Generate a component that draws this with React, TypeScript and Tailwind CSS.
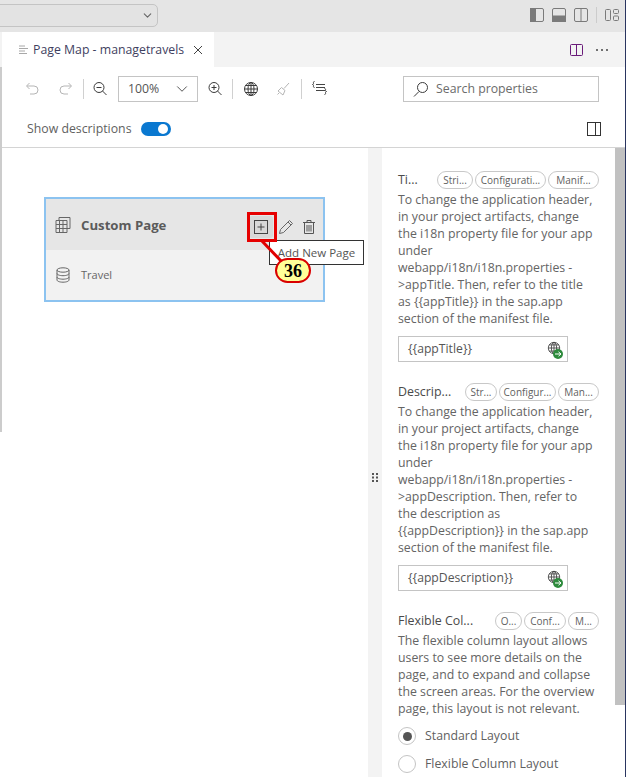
import { ChevronDown } from "lucide-react"
import type { ReactNode } from "react"

const font = { fontFamily: '"Open Sans", "Liberation Sans", sans-serif' }

function Glyph({ size = 16, stroke = "#616161", children }: { size?: number; stroke?: string; children: ReactNode }) {
  return (
    <svg width={size} height={size} viewBox="0 0 16 16" fill="none" stroke={stroke} strokeWidth="1" className="shrink-0">
      {children}
    </svg>
  )
}

function Globe({ size = 16, stroke = "#3b3b3b" }: { size?: number; stroke?: string }) {
  return (
    <Glyph size={size} stroke={stroke}>
      <circle cx="8" cy="8" r="6.5" />
      <ellipse cx="8" cy="8" rx="3" ry="6.5" />
      <path d="M1.5 8h13M2.5 4.5h11M2.5 11.5h11M8 1.5v13" />
    </Glyph>
  )
}

function Pill({ w, children }: { w: number; children: ReactNode }) {
  return (
    <span
      className="flex h-[18px] shrink-0 items-center justify-center rounded-full border border-[#c8c8c8] bg-white text-[10px] text-[#5f5f5f]"
      style={{ width: w }}
    >
      {children}
    </span>
  )
}

function TextField({ value }: { value: string }) {
  return (
    <div className="flex h-[26px] w-[170px] items-center justify-between border border-[#c4c4c4] pl-[9px] pr-[5px] text-[12.2px] text-[#555555]">
      <span className="pt-[1px]">{value}</span>
      <span className="relative block h-[16px] w-[15px]">
        <Globe size={14} stroke="#444444" />
        <svg width="10" height="10" viewBox="0 0 10 10" className="absolute bottom-[-2px] right-[-1px]">
          <circle cx="5" cy="5" r="5" fill="#2e8b3d" />
          <path d="M2 5h6M5.500 2.800L8 5 5.500 7.200" fill="none" stroke="#ffffff" strokeWidth="1" />
        </svg>
      </span>
    </div>
  )
}

function Radio({ checked, label }: { checked?: boolean; label: string }) {
  return (
    <div className="flex h-[28px] items-center gap-[9px] text-[12.3px] text-[#5f5f5f]">
      <span className="flex h-[18px] w-[18px] items-center justify-center rounded-full border border-[#c4c4c4]">
        {checked && <span className="h-[9px] w-[9px] rounded-full bg-[#555555]" />}
      </span>
      {label}
    </div>
  )
}

function Property({
  title,
  titleW,
  pills,
  field,
  children,
}: {
  title: string
  titleW: number
  pills: [number, string][]
  field?: string
  children: ReactNode
}) {
  return (
    <div>
      <div className="flex h-[18px] items-center">
        <span className="shrink-0 whitespace-nowrap pt-[1px] text-[12.4px] font-medium text-[#4a4a4a]" style={{ width: titleW }}>
          {title}
        </span>
        <div className="flex gap-[2px]">
          {pills.map(([w, t]) => (
            <Pill key={t} w={w}>
              {t}
            </Pill>
          ))}
        </div>
      </div>
      <p className="mt-[2px] whitespace-nowrap text-[12.3px] leading-[17px] text-[#646464]">{children}</p>
      {field && (
        <div className="mt-[9px]">
          <TextField value={field} />
        </div>
      )}
    </div>
  )
}

export default function App() {
  return (
    <div className="relative flex h-[777px] w-[626px] flex-col overflow-hidden border-r border-[#2a3560] bg-white" style={font}>
      {/* window title bar */}
      <div className="flex h-[32px] shrink-0 items-center justify-between bg-[#e5e5e5] pb-[2px] pr-[6px]">
        <div className="ml-[-10px] flex h-[23px] w-[168px] items-center justify-end rounded-[5px] border border-[#c4c4c4] bg-[#e3e3e3] pr-[3px]">
          <ChevronDown size={13} color="#666666" />
        </div>
        <div className="flex items-center gap-[8px]">
          <svg width="14" height="14" viewBox="0 0 14 14" fill="none" stroke="#7a7a7a">
            <rect x="0.5" y="0.5" width="13" height="13" rx="1.5" />
            <rect x="0.5" y="0.5" width="5" height="13" fill="#7a7a7a" />
          </svg>
          <svg width="14" height="14" viewBox="0 0 14 14" fill="none" stroke="#7a7a7a">
            <rect x="0.5" y="0.5" width="13" height="13" rx="1.5" />
            <rect x="0.5" y="8" width="13" height="5.5" fill="#7a7a7a" />
          </svg>
          <svg width="14" height="14" viewBox="0 0 14 14" fill="none" stroke="#7a7a7a">
            <rect x="0.5" y="0.5" width="13" height="13" rx="1.5" />
            <path d="M7 .5v13" />
          </svg>
          <span className="h-[16px] w-px bg-[#cccccc]" />
          <svg width="14" height="14" viewBox="0 0 14 14" fill="none" stroke="#7a7a7a">
            <rect x="0.5" y="1.5" width="5" height="11" rx="1" />
            <rect x="8.5" y="1.5" width="5" height="4" rx="1" />
            <rect x="8.5" y="8" width="5" height="4.5" rx="1" />
          </svg>
        </div>
      </div>

      {/* tab strip */}
      <div className="flex h-[35px] shrink-0 items-center justify-between bg-[#f3f3f3] pl-[2px] pr-[17px]">
        <div className="flex h-full w-[212px] items-center bg-white pl-[16px]">
          <svg width="12" height="12" viewBox="0 0 12 12" stroke="#a8a8a8" className="mr-[3px]">
            <path d="M1 2h6M1 4.500h9M1 7h6M1 9.500h8" />
          </svg>
          <span className="whitespace-nowrap pt-[1px] text-[12.3px] text-[#3f3f5f]">Page Map - managetravels</span>
          <svg width="12" height="12" viewBox="0 0 12 12" stroke="#444444" className="ml-[8px]">
            <path d="M2 2l8 8M10 2l-8 8" />
          </svg>
        </div>
        <div className="flex items-center gap-[12px]">
          <svg width="14" height="14" viewBox="0 0 14 14" fill="none" stroke="#6a1b7a">
            <rect x="0.5" y="1.5" width="12" height="11" rx="1" />
            <path d="M6.500 1.500v11" />
          </svg>
          <span className="flex gap-[3px]">
            <span className="h-[2px] w-[2px] rounded-full bg-[#444444]" />
            <span className="h-[2px] w-[2px] rounded-full bg-[#444444]" />
            <span className="h-[2px] w-[2px] rounded-full bg-[#444444]" />
          </span>
        </div>
      </div>

      <div className="flex min-h-0 flex-1">
        <div className="mb-[345px] w-[2px] shrink-0 bg-[#cccccc]" />
        <div className="flex min-w-0 flex-1 flex-col">
          {/* toolbar */}
          <div className="flex h-[43px] shrink-0 items-center pl-[22px] pr-[26px]">
            <Glyph stroke="#b5b5b5">
              <path d="M5.500 2L2.500 5l3 3M3 5h7a3.500 3.500 0 0 1 0 8H6" />
            </Glyph>
            <span className="ml-[18px]">
              <Glyph stroke="#b5b5b5">
                <path d="M10.500 2l3 3-3 3M13 5H6a3.500 3.500 0 0 0 0 8h4" />
              </Glyph>
            </span>
            <span className="ml-[9px] mr-[8px] h-[20px] w-px bg-[#d0d0d0]" />
            <Glyph stroke="#3b3b3b">
              <circle cx="7" cy="6.500" r="5" />
              <path d="M4.500 6.500h5M10.500 10l4 4" />
            </Glyph>
            <div className="ml-[10px] flex h-[26px] w-[80px] items-center justify-between border border-[#c4c4c4] pl-[9px] pr-[6px] text-[12.3px] text-[#555555]">
              <span className="pt-[1px]">100%</span>
              <ChevronDown size={18} color="#444444" strokeWidth={1.2} />
            </div>
            <span className="ml-[9px]">
              <Glyph stroke="#3b3b3b">
                <circle cx="7" cy="6.500" r="5" />
                <path d="M4.500 6.500h5M7 4v5M10.500 10l4 4" />
              </Glyph>
            </span>
            <span className="ml-[9px] mr-[10px] h-[20px] w-px bg-[#d0d0d0]" />
            <Globe />
            <span className="ml-[16px]">
              <Glyph stroke="#b5b5b5">
                <path d="M14 2L9 7.500M6.500 6.500l3.500 3-2 4.500-5-4zM4 12l-1.500 1.500" />
              </Glyph>
            </span>
            <span className="ml-[10px] mr-[8px] h-[20px] w-px bg-[#d0d0d0]" />
            <svg width="18" height="14" viewBox="0 0 18 14" fill="none" stroke="#444444" className="mb-[2px] shrink-0">
              <path d="M4.500 0.500C3 0.500 3.500 2 3.500 2.500S3 3.500 2.500 3.500c.5 0 1 .5 1 1S3 6.500 4.500 6.500M6 3.500h9M6 6.500h9M6 9.500h9M14.500 7.500c1.500 0 1 1.500 1 2s.5 1 1 1c-.5 0-1 .5-1 1s.5 2-1 2" />
            </svg>
            <div className="ml-auto flex h-[26px] w-[196px] items-center border border-[#c4c4c4] pl-[9px] text-[12.3px] text-[#6b6b6b]">
              <svg width="16" height="16" viewBox="0 0 16 16" fill="none" stroke="#3b3b3b" className="mr-[7px] shrink-0">
                <circle cx="9.500" cy="6.500" r="5" />
                <path d="M6 10.500L1 15.500" />
              </svg>
              <span className="pt-[1px]">Search properties</span>
            </div>
          </div>

          {/* show descriptions row */}
          <div className="flex h-[38px] shrink-0 items-center border-b border-[#d4d4d4] pl-[25px] pr-[24px]">
            <span className="pt-[1px] text-[12.3px] text-[#616161]">Show descriptions</span>
            <span className="ml-[9px] flex h-[14px] w-[30px] items-center justify-end rounded-full bg-[#0a78d0] pr-[3px]">
              <span className="h-[10px] w-[10px] rounded-full bg-white" />
            </span>
            <svg width="14" height="14" viewBox="0 0 14 14" fill="none" stroke="#333333" className="ml-auto">
              <rect x="0.5" y="0.5" width="13" height="13" />
              <path d="M8.500 .5v13" />
            </svg>
          </div>

          <div className="flex min-h-0 flex-1">
            {/* canvas */}
            <div className="w-[366px] shrink-0 pl-[42px] pt-[49px]">
              <div className="h-[105px] w-[281px] border-2 border-[#8cc3f0] bg-[#f2f2f2]">
                <div className="flex h-[51px] items-center bg-[#e6e6e6] pl-[9px] pr-[6px]">
                  <svg width="16" height="18" viewBox="0 0 16 18" fill="none" stroke="#666666" className="shrink-0">
                    <path d="M1 4.500h11v12H1zM1 8.500h11M1 12.500h11M4.500 4.500v12M8 4.500v12M4 4.500V1.500h11v11h-3" />
                  </svg>
                  <span className="ml-[10px] pt-[2px] text-[13.2px] font-bold text-[#5b5b5b]">Custom Page</span>
                  <div className="ml-auto flex items-center pt-[4px]">
                    <span className="flex h-[22px] w-[24px] items-center justify-center rounded-[3px] bg-[#d8d8d8]">
                      <svg width="14" height="14" viewBox="0 0 14 14" fill="none" stroke="#444444">
                        <rect x="0.5" y="0.5" width="13" height="13" />
                        <path d="M3.500 7h7M7 3.500v7" />
                      </svg>
                    </span>
                    <span className="ml-[5px]">
                      <Glyph stroke="#666666">
                        <path d="M1.500 14.500l1-4L11.500 1.500l3 3-9 9zM10 3l3 3" />
                      </Glyph>
                    </span>
                    <span className="ml-[7px]">
                      <Glyph stroke="#555555">
                        <path d="M2 3.500h12M6 3.500V1.500h4v2M3.500 3.500v11h9v-11M6 6v6.500M8 6v6.500M10 6v6.500" />
                      </Glyph>
                    </span>
                  </div>
                </div>
                <div className="flex h-[50px] items-center pl-[9px]">
                  <svg width="16" height="16" viewBox="0 0 16 16" fill="none" stroke="#666666" className="shrink-0">
                    <ellipse cx="8" cy="3" rx="6" ry="2.2" />
                    <path d="M2 3v10c0 1.200 2.700 2.200 6 2.200s6-1 6-2.200V3M2 6.500c0 1.200 2.700 2.200 6 2.200s6-1 6-2.200M2 10c0 1.200 2.700 2.200 6 2.200s6-1 6-2.200" />
                  </svg>
                  <span className="ml-[10px] pt-[1px] text-[11px] text-[#666666]">Travel</span>
                </div>
              </div>
            </div>

            {/* splitter */}
            <div className="flex w-[14px] shrink-0 items-center justify-center bg-[#f3f3f3] pt-[30px]">
              <svg width="6" height="9" viewBox="0 0 6 9" fill="#555555">
                <rect x="0" y="0" width="2" height="2" />
                <rect x="4" y="0" width="2" height="2" />
                <rect x="0" y="3.500" width="2" height="2" />
                <rect x="4" y="3.500" width="2" height="2" />
                <rect x="0" y="7" width="2" height="2" />
                <rect x="4" y="7" width="2" height="2" />
              </svg>
            </div>

            {/* properties */}
            <div className="flex min-w-0 flex-1 flex-col gap-[21px] pl-[16px] pt-[23px]">
              <Property
                title="Ti..."
                titleW={39}
                pills={[
                  [36, "Stri..."],
                  [71, "Configurati..."],
                  [51, "Manif..."],
                ]}
                field="{{appTitle}}"
              >
                To change the application header,
                <br />
                in your project artifacts, change
                <br />
                the i18n property file for your app
                <br />
                under
                <br />
                webapp/i18n/i18n.properties -
                <br />
                &gt;appTitle. Then, refer to the title
                <br />
                as {"{{appTitle}}"} in the sap.app
                <br />
                section of the manifest file.
              </Property>
              <Property
                title="Descrip..."
                titleW={67}
                pills={[
                  [32, "Str..."],
                  [57, "Configur..."],
                  [41, "Man..."],
                ]}
                field="{{appDescription}}"
              >
                To change the application header,
                <br />
                in your project artifacts, change
                <br />
                the i18n property file for your app
                <br />
                under
                <br />
                webapp/i18n/i18n.properties -
                <br />
                &gt;appDescription. Then, refer to
                <br />
                the description as
                <br />
                {"{{appDescription}}"} in the sap.app
                <br />
                section of the manifest file.
              </Property>
              <div>
                <Property
                  title="Flexible Col..."
                  titleW={97}
                  pills={[
                    [27, "O..."],
                    [42, "Conf..."],
                    [31, "M..."],
                  ]}
                >
                  The flexible column layout allows
                  <br />
                  users to see more details on the
                  <br />
                  page, and to expand and collapse
                  <br />
                  the screen areas. For the overview
                  <br />
                  page, this layout is not relevant.
                </Property>
                <div className="mt-[5px]">
                  <Radio checked label="Standard Layout" />
                  <Radio label="Flexible Column Layout" />
                </div>
              </div>
            </div>

            {/* scrollbar */}
            <div className="w-[10px] shrink-0">
              <div className="h-[557px] bg-[#c1c1c1]" />
            </div>
          </div>
        </div>
      </div>

      {/* callout over the card */}
      <div className="absolute left-[269px] top-[240px] flex h-[25px] w-[95px] items-center justify-center border border-[#333333] bg-white text-[11.5px] text-[#555555]">
        Add New Page
      </div>
      <svg width="40" height="40" viewBox="0 0 40 40" className="absolute left-[256px] top-[238px]" stroke="#e00000" strokeWidth="3">
        <path d="M5 2l22 23" />
      </svg>
      <div className="absolute left-[247px] top-[212px] h-[30px] w-[30px] border-[3px] border-[#e60000]" />
      <div
        className="absolute left-[275px] top-[258px] flex h-[25px] w-[36px] items-center justify-center rounded-full border-2 border-[#d90000] bg-[#ffff99] text-[18px] font-bold leading-none text-black"
        style={{ fontFamily: '"Liberation Serif", serif' }}
      >
        36
      </div>
    </div>
  )
}
